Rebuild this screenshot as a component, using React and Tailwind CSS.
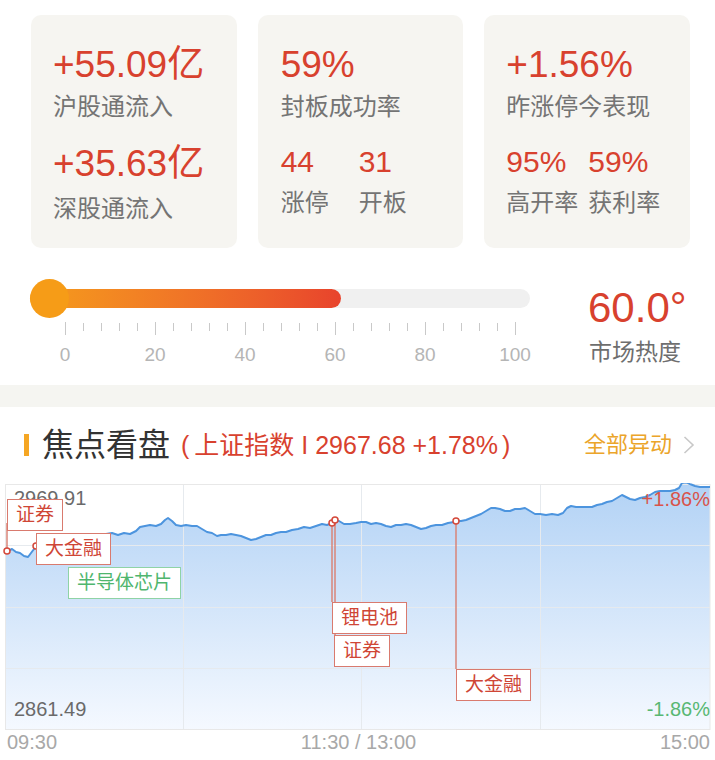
import React from "react";

const RAW = [
  [5,551],[8,551],[12,549],[16,552],[20,553],[24,556],[28,557],[31,553],[34,549],[38,546],[42,545],[48,543],[55,542],[62,541],[70,540],[78,541],[85,539],[92,538],[100,537],[106,534],[112,533],[118,535],[124,533],[130,534],[136,531],[140,527],[145,526],[150,525],[156,526],[161,524],[165,520],[168,518],[172,521],[176,525],[181,526],[186,525],[192,526],[197,526],[202,529],[207,532],[212,533],[217,536],[221,535],[226,535],[231,534],[236,535],[241,536],[246,538],[251,540],[256,539],[261,537],[266,535],[271,535],[276,533],[281,532],[286,532],[292,530],[298,529],[304,527],[310,528],[316,526],[322,524],[327,525],[332,523],[335,520],[339,521],[344,524],[350,524],[356,523],[361,522],[366,522],[371,524],[376,523],[381,524],[386,526],[391,527],[396,525],[401,525],[406,524],[411,525],[416,527],[421,529],[426,528],[431,526],[436,525],[442,525],[448,523],[454,522],[456,521],[461,521],[466,520],[471,518],[476,516],[481,514],[486,511],[491,508],[495,508],[500,509],[505,511],[510,511],[515,509],[520,509],[525,508],[530,511],[535,514],[540,514],[546,515],[552,514],[558,515],[563,513],[567,508],[571,506],[576,507],[581,507],[587,507],[592,507],[597,505],[602,504],[607,502],[612,501],[617,498],[622,495],[626,497],[630,499],[635,500],[640,498],[645,497],[650,495],[655,492],[660,491],[665,491],[670,491],[675,490],[679,488],[682,483],[686,482],[690,484],[695,486],[700,487],[705,487],[710,487]
];
const TOP = 483;
const PTS = RAW.map(([x, y]) => [x, y - TOP]);
const LINE = PTS.map(([x, y], i) => `${i ? "L" : "M"}${x},${y}`).join(" ");
const AREA = `${LINE} L710,246 L5,246 Z`;

function Card({ children, pl }) {
  return (
    <div className={`h-[233px] rounded-[10px] bg-[#f6f5f1] pt-[29px] ${pl}`}>{children}</div>
  );
}

function Box({ left, top, green, children }) {
  return (
    <div
      className={`absolute whitespace-nowrap border-[1.5px] bg-white px-[8px] text-[19px] leading-[30px] ${
        green ? "border-[#8fd3a6] text-[#4fb66e]" : "border-[#d97a6e] text-[#cf4636]"
      }`}
      style={{ left, top }}
    >
      {children}
    </div>
  );
}

export default function App() {
  const ticks = Array.from({ length: 26 }, (_, i) => i);
  return (
    <div className="h-[760px] w-[715px] overflow-hidden bg-white font-['Liberation_Sans','Noto_Sans_CJK_SC',sans-serif]">
      {/* cards */}
      <div className="grid grid-cols-3 gap-[21px] pl-[31px] pr-[25px] pt-[15px]">
        <Card pl="pl-[22px]">
          <div className="text-[37px] leading-[42px] text-[#d8412e]">+55.09亿</div>
          <div className="mt-[7px] text-[24px] leading-[28px] text-[#747474]">沪股通流入</div>
          <div className="mt-[22px] text-[37px] leading-[42px] text-[#d8412e]">+35.63亿</div>
          <div className="mt-[10px] text-[24px] leading-[28px] text-[#747474]">深股通流入</div>
        </Card>
        <Card pl="pl-[23px]">
          <div className="text-[37px] leading-[42px] text-[#d8412e]">59%</div>
          <div className="mt-[7px] text-[24px] leading-[28px] text-[#747474]">封板成功率</div>
          <div className="mt-[24px] flex">
            <div className="w-[78px]">
              <div className="text-[30px] leading-[34px] text-[#d8412e]">44</div>
              <div className="mt-[10px] text-[24px] leading-[28px] text-[#747474]">涨停</div>
            </div>
            <div>
              <div className="text-[30px] leading-[34px] text-[#d8412e]">31</div>
              <div className="mt-[10px] text-[24px] leading-[28px] text-[#747474]">开板</div>
            </div>
          </div>
        </Card>
        <Card pl="pl-[22px]">
          <div className="text-[37px] leading-[42px] text-[#d8412e]">+1.56%</div>
          <div className="mt-[7px] text-[24px] leading-[28px] text-[#747474]">昨涨停今表现</div>
          <div className="mt-[24px] flex">
            <div className="w-[82px]">
              <div className="text-[30px] leading-[34px] text-[#d8412e]">95%</div>
              <div className="mt-[10px] text-[24px] leading-[28px] text-[#747474]">高开率</div>
            </div>
            <div>
              <div className="text-[30px] leading-[34px] text-[#d8412e]">59%</div>
              <div className="mt-[10px] text-[24px] leading-[28px] text-[#747474]">获利率</div>
            </div>
          </div>
        </Card>
      </div>

      {/* market heat */}
      <div className="flex h-[137px]">
        <div className="w-[560px] pl-[30px] pt-[41px]">
          <div className="relative h-[19px] w-[500px] rounded-full bg-[#f0f0f0]">
            <div className="h-full w-[311px] rounded-full bg-linear-to-r from-[#f59d1a] to-[#e8432c]" />
            <div className="absolute left-0 top-[-10px] h-[39px] w-[39px] rounded-full bg-[#f69c17]" />
          </div>
          <div className="ml-[35px] mt-[14px] flex w-[451px] items-start justify-between">
            {ticks.map((i) =>
              i % 5 === 0 ? (
                <div key={i} className="h-[13px] w-px bg-[#c9c9c9]" />
              ) : (
                <div key={i} className="mt-px h-[8px] w-px bg-[#c9c9c9]" />
              )
            )}
          </div>
          <div className="ml-[-10px] mt-[10px] flex text-[19px] leading-[20px] text-[#b5b5b5]">
            {["0", "20", "40", "60", "80", "100"].map((t) => (
              <div key={t} className="w-[90px] text-center">{t}</div>
            ))}
          </div>
        </div>
        <div className="pl-[28px] pt-[38px]">
          <div className="text-[42px] leading-[44px] text-[#d8412e]">60.0°</div>
          <div className="mt-[8px] pl-[1px] text-[23px] leading-[28px] text-[#6e6e6e]">市场热度</div>
        </div>
      </div>

      <div className="h-[22px] bg-[#f5f5f1]" />

      {/* header */}
      <div className="flex h-[76px] items-center pl-[24px] pr-[20px]">
        <div className="h-[22px] w-[5px] bg-[#f5a623]" />
        <div className="ml-[13px] text-[32px] leading-none text-[#333333]">焦点看盘</div>
        <div className="ml-[11px] flex text-[25px] leading-none text-[#d8412e]">
          <span>(</span>
          <span className="ml-[5px]">上证指数 I 2967.68 +1.78%</span>
          <span className="ml-[4px]">)</span>
        </div>
        <div className="ml-auto flex items-center">
          <span className="text-[22px] leading-none text-[#eba52a]">全部异动</span>
          <svg className="ml-[11px]" width="12" height="18" viewBox="0 0 12 18">
            <polyline points="1.5,1 10,9 1.5,17" fill="none" stroke="#c8c8c8" strokeWidth="1.6" />
          </svg>
        </div>
      </div>

      {/* chart */}
      <div className="relative h-[247px]">
        <svg className="block" width="715" height="247" viewBox="0 0 715 247">
          <defs>
            <linearGradient id="fillg" gradientUnits="userSpaceOnUse" x1="0" y1="0" x2="0" y2="247">
              <stop offset="0" stopColor="#b2d2f5" />
              <stop offset="1" stopColor="#f5f9ff" />
            </linearGradient>
          </defs>
          <path d={AREA} fill="url(#fillg)" />
          <g stroke="#e6eaee" strokeWidth="1">
            <line x1="5" y1="62.5" x2="710" y2="62.5" />
            <line x1="5" y1="124.5" x2="710" y2="124.5" />
            <line x1="5" y1="185.5" x2="710" y2="185.5" />
            <line x1="183.5" y1="1" x2="183.5" y2="246" />
            <line x1="361.5" y1="1" x2="361.5" y2="246" />
            <line x1="540.5" y1="1" x2="540.5" y2="246" />
          </g>
          <rect x="5.5" y="1.5" width="704.5" height="245" fill="none" stroke="#e8e8e8" strokeWidth="1" />
          <path d={LINE} fill="none" stroke="#4c94de" strokeWidth="2" strokeLinejoin="round" />
          <g stroke="#d98478" strokeWidth="1.5">
            <line x1="7" y1="40" x2="7" y2="68" />
            <line x1="332" y1="40" x2="332" y2="119" />
            <line x1="335" y1="37" x2="335" y2="152" />
            <line x1="456" y1="38" x2="456" y2="186" />
          </g>
          <g fill="#ffffff" stroke="#d4483a" strokeWidth="1.5">
            <circle cx="7" cy="68" r="3" />
            <circle cx="36" cy="63" r="3" />
            <circle cx="332" cy="40" r="3" />
            <circle cx="335" cy="37" r="3" />
            <circle cx="456" cy="38" r="3" />
          </g>
        </svg>
        <div className="absolute left-[14px] top-[5px] text-[20px] leading-[20px] text-[#6a6a6a]">2969.91</div>
        <div className="absolute left-[14px] top-[216px] text-[20px] leading-[20px] text-[#6a6a6a]">2861.49</div>
        <div className="absolute right-[5px] top-[6px] text-[20px] leading-[20px] text-[#d9534a]">+1.86%</div>
        <div className="absolute right-[5px] top-[216px] text-[20px] leading-[20px] text-[#58b873]">-1.86%</div>
        <Box left={7} top={16}>证券</Box>
        <Box left={36} top={50}>大金融</Box>
        <Box left={68} top={84} green>半导体芯片</Box>
        <Box left={332} top={119}>锂电池</Box>
        <Box left={334} top={152}>证券</Box>
        <Box left={456} top={186}>大金融</Box>
      </div>

      {/* time axis */}
      <div className="flex justify-between pl-[7px] pr-[5px] pt-[2px] text-[20px] leading-[20px] text-[#a8a8a8]">
        <span>09:30</span>
        <span>11:30 / 13:00</span>
        <span>15:00</span>
      </div>
    </div>
  );
}
